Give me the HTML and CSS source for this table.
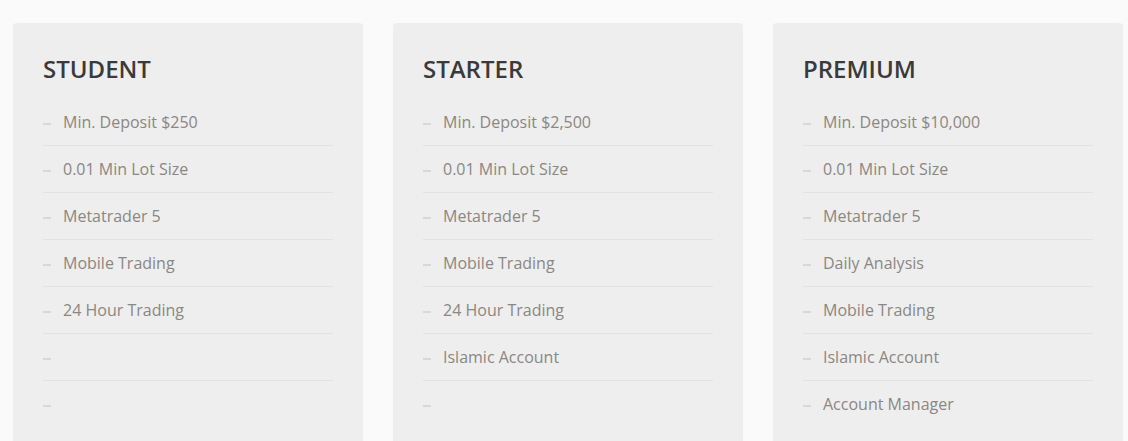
FILE: index.html
```html
<!DOCTYPE html>
<html>
<head>
<meta charset="utf-8">
<link rel="stylesheet" href="styles.css">
</head>
<body>
<div class="plans">
  <div class="card">
    <h3 class="title">STUDENT</h3>
    <ul class="features">
      <li>Min. Deposit $250</li>
      <li>0.01 Min Lot Size</li>
      <li>Metatrader 5</li>
      <li>Mobile Trading</li>
      <li>24 Hour Trading</li>
      <li></li>
      <li></li>
    </ul>
  </div>
  <div class="card">
    <h3 class="title">STARTER</h3>
    <ul class="features">
      <li>Min. Deposit $2,500</li>
      <li>0.01 Min Lot Size</li>
      <li>Metatrader 5</li>
      <li>Mobile Trading</li>
      <li>24 Hour Trading</li>
      <li>Islamic Account</li>
      <li></li>
    </ul>
  </div>
  <div class="card">
    <h3 class="title">PREMIUM</h3>
    <ul class="features">
      <li>Min. Deposit $10,000</li>
      <li>0.01 Min Lot Size</li>
      <li>Metatrader 5</li>
      <li>Daily Analysis</li>
      <li>Mobile Trading</li>
      <li>Islamic Account</li>
      <li>Account Manager</li>
    </ul>
  </div>
</div>
</body>
</html>
```

FILE: styles.css
```css
html, body {
  margin: 0;
  padding: 0;
  background: #fafafa;
  overflow: hidden;
}
body {
  font-family: "Open Sans", "Noto Sans", sans-serif;
}
.plans {
  display: flex;
  gap: 30px;
  padding: 23px 0 0 13px;
}
.card {
  width: 350px;
  box-sizing: border-box;
  background: #eeeeee;
  border-radius: 4px;
  padding: 30px 30px 20px 30px;
}
.title {
  margin: 0 0 14px 0;
  font-size: 24px;
  line-height: 32px;
  font-weight: 600;
  color: #3a3a3a;
}
.features {
  list-style: none;
  margin: 0;
  padding: 0;
}
.features li {
  display: flex;
  align-items: center;
  gap: 12px;
  min-height: 22px;
  padding: 12px 0;
  font-size: 16px;
  line-height: 22px;
  color: #8b8782;
  border-bottom: 1px solid #e2e2e2;
}
.features li:last-child {
  border-bottom: none;
}
.features li::before {
  content: "";
  flex: 0 0 8px;
  height: 2px;
  margin-top: 4px;
  background: #d8d8d8;
}
```
